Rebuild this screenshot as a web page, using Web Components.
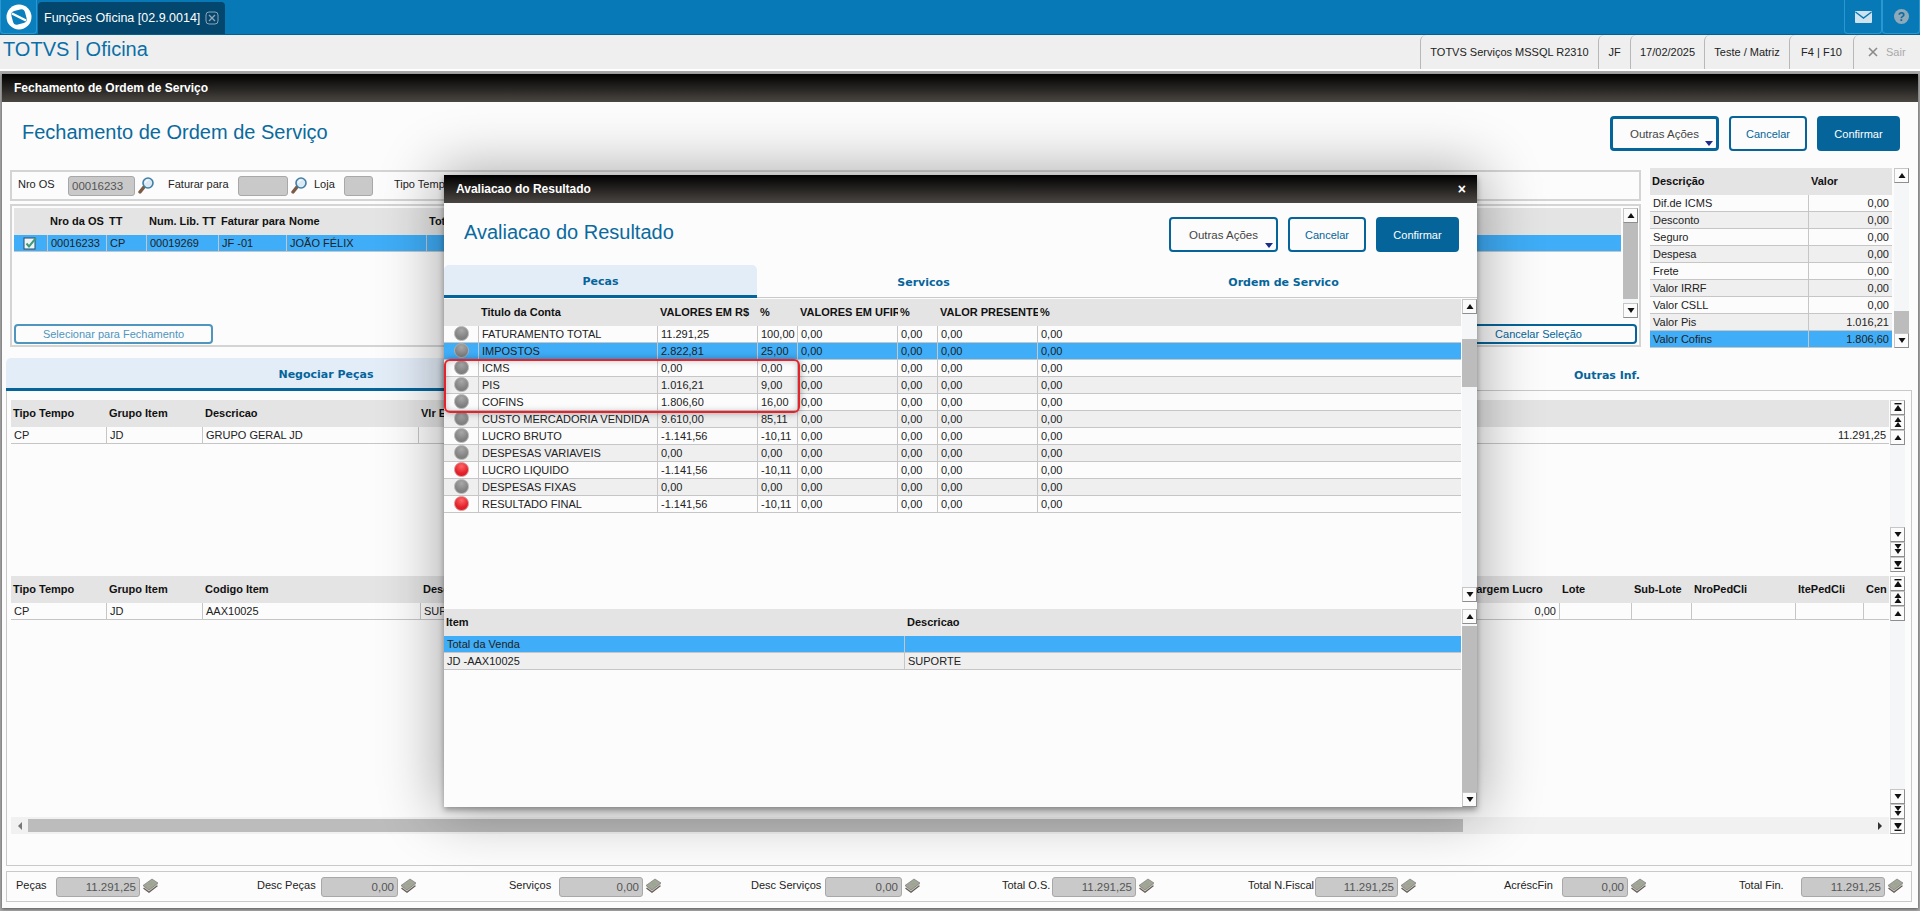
<!DOCTYPE html>
<html lang="pt-BR">
<head>
<meta charset="utf-8">
<title>TOTVS | Oficina</title>
<style>
html, body { margin: 0; height: 911px; overflow: hidden; background: #a9a9a9; font-family: "Liberation Sans", Arial, sans-serif; font-size: 11px; color: #222; }
</style>
</head>
<body>
<tv-app></tv-app>
<script>
// base: each element just gets a shadow root with its css + html
class TvBase extends HTMLElement {
    render(css, html) {
        if (!this.shadowRoot) this.attachShadow({ mode: 'open' });
        this.shadowRoot.innerHTML = `<style>${css}</style>${html}`;
    }
}

const ICONS = {
    lens: `<svg width="16" height="19" viewBox="0 0 16 19"><path d="M6 11 L2 16" stroke="#7d5a44" stroke-width="3.4" stroke-linecap="round"/><circle cx="10" cy="7" r="5" fill="#dbe9f3" stroke="#3f7fa6" stroke-width="1.6"/><path d="M7.5 7a3 3 0 0 1 3-3" stroke="#fff" fill="none"/></svg>`,
    money: `<svg width="17" height="17" viewBox="0 0 17 17"><path d="M1 10.5 L10 4 L16 8 L7 15 Z" fill="#5f5a52"/><path d="M1 9 L10 2.5 L16 6.5 L7 13.5 Z" fill="#cfccc4"/><path d="M1 7.5 L10 1 L16 5 L7 12 Z" fill="#a3a59b" stroke="#6f6f68" stroke-width=".6"/><ellipse cx="9" cy="6" rx="1.8" ry="1.1" fill="#8fb07f"/></svg>`,
    check: `<svg width="15" height="14" viewBox="0 0 15 14"><rect x="1" y="2" width="11" height="11" fill="#eef3f6" stroke="#2b4a66"/><path d="M3.5 7.5 L6 10.5 L13 2" fill="none" stroke="#3f9a7a" stroke-width="2"/></svg>`
};

customElements.define('tv-topbar', class extends TvBase {
    connectedCallback() {
        this.render(`
            :host { display: flex; height: 35px; background: #0779b7; border-bottom: 1px solid #05608f; box-sizing: border-box; }
            .logo { width: 37px; height: 34px; background: #0a7fbe; border: 1px solid #2a97d2; border-top: 0; border-radius: 0 0 4px 4px; box-sizing: border-box; display: flex; align-items: center; justify-content: center; }
            .tab { width: 187px; margin: 2px 0 0 1px; background: #03466e; border-radius: 4px 4px 0 0; color: #fff; font-size: 12.5px; display: flex; align-items: center; padding-left: 6px; box-sizing: border-box; white-space: nowrap; }
            .tab svg { margin-left: 5px; }
            .grow { flex: 1; }
            .btn { width: 38px; height: 34px; border: 1px solid #2a97d2; border-top: 0; border-radius: 0 0 4px 4px; box-sizing: border-box; display: flex; align-items: center; justify-content: center; }
        `, `
            <div class="logo"><svg width="26" height="26" viewBox="0 0 26 26"><circle cx="13" cy="13" r="12.5" fill="#fff"/><rect x="6" y="6" width="14" height="14" rx="4" fill="#0a7fbe" transform="rotate(-15 13 13)"/><path d="M6 9.5 L20 16.5" stroke="#fff" stroke-width="2.4"/></svg></div>
            <div class="tab">Funções Oficina [02.9.0014]<svg width="14" height="14" viewBox="0 0 14 14"><rect x="1" y="1" width="12" height="12" rx="3" fill="none" stroke="#8fa6b6"/><path d="M4 4 L10 10 M10 4 L4 10" stroke="#8fa6b6" stroke-width="1.4"/></svg></div>
            <div class="grow"></div>
            <div class="btn"><svg width="17" height="12" viewBox="0 0 17 12"><rect width="17" height="12" rx="1" fill="#cfe3ef"/><path d="M0.5 1 L8.5 7 L16.5 1" fill="none" stroke="#0779b7" stroke-width="1.4"/></svg></div>
            <div class="btn"><svg width="15" height="15" viewBox="0 0 15 15"><circle cx="7.5" cy="7.5" r="7.5" fill="#8ea9b9"/><text x="7.5" y="11.6" text-anchor="middle" font-family="Liberation Sans" font-weight="700" font-size="12" fill="#0a6a9e">?</text></svg></div>
        `);
    }
});

customElements.define('tv-infobar', class extends TvBase {
    connectedCallback() {
        this.render(`
            :host { display: flex; height: 36px; box-sizing: border-box; background: #efefef; border-bottom: 2px solid #fff; align-items: stretch; }
            h2 { margin: 0 0 0 3px; flex: 1; font: 400 20px "Liberation Sans", Arial, sans-serif; color: #0a6fa8; line-height: 28px; }
            .c { border-left: 1px solid #b8b8b8; border-radius: 6px 0 0 0; box-sizing: border-box; display: flex; align-items: center; justify-content: center; font-size: 11px; color: #222; white-space: nowrap; }
            .sair { color: #a9a9a9; gap: 8px; justify-content: flex-start; padding-left: 14px; }
        `, `
            <h2>TOTVS | Oficina</h2>
            <div class="c" style="width:178px">TOTVS Serviços MSSQL R2310</div>
            <div class="c" style="width:32px">JF</div>
            <div class="c" style="width:74px">17/02/2025</div>
            <div class="c" style="width:85px">Teste / Matriz</div>
            <div class="c" style="width:64px">F4 | F10</div>
            <div class="c sair" style="width:67px"><svg width="10" height="10" viewBox="0 0 10 10"><path d="M1 1 L9 9 M9 1 L1 9" stroke="#8a8a8a" stroke-width="1.6"/></svg>Sair</div>
        `);
    }
});

customElements.define('tv-window', class extends TvBase {
    connectedCallback() {
        const x = this.hasAttribute('closable') ? `<span class="x">×</span>` : '';
        this.render(`
            :host { display: flex; flex-direction: column; background: #fcfcfc; }
            header { height: 28px; flex: none; background: linear-gradient(#000, #4a4642); color: #fff; font-weight: 700; font-size: 12px; display: flex; align-items: center; justify-content: space-between; padding: 0 12px; }
            .x { font-size: 14px; font-weight: 700; margin-right: -1px; }
            main { flex: 1; min-height: 0; display: flex; flex-direction: column; }
        `, `<header><span>${this.getAttribute('heading')}</span>${x}</header><main><slot></slot></main>`);
    }
});

customElements.define('tv-button', class extends TvBase {
    connectedCallback() {
        const menu = this.hasAttribute('menu');
        const thick = this.hasAttribute('thick');
        this.render(`
            :host { display: inline-flex; box-sizing: border-box; height: 35px; border: ${thick ? 3 : 2}px solid #05659b; border-radius: 4px; align-items: center; justify-content: center; position: relative; font-size: ${menu ? 11.5 : 11}px; white-space: nowrap; color: ${menu ? '#444' : '#05659b'}; background: #fcfcfc; }
            :host([primary]) { background: #05659b; color: #fff; }
            :host([thin]) { height: 20px; }
            :host([muted]) { border-color: #4f95bd; color: #4f95bd; }
            .arrow { position: absolute; right: 3px; bottom: 2px; width: 0; height: 0; border: 4px solid transparent; border-bottom: 0; border-top: 5px solid #1b2c8c; }
        `, `<slot></slot>${menu ? '<span class="arrow"></span>' : ''}`);
    }
});

customElements.define('tv-tabs', class extends TvBase {
    connectedCallback() {
        this.render(`:host { display: flex; height: 33px; flex: none; box-sizing: border-box; border-bottom: 1px solid #c9c9c9; }`, `<slot></slot>`);
    }
});

customElements.define('tv-tab', class extends TvBase {
    connectedCallback() {
        this.render(`
            :host { display: flex; flex: none; align-items: center; justify-content: center; box-sizing: border-box; height: 33px; padding-top: 2px; font: 700 11px "DejaVu Sans", Verdana, sans-serif; color: #05659b; white-space: nowrap; }
            :host([active]) { background: #e3edf8; border-radius: 5px 5px 0 0; border-bottom: 3px solid #05659b; }
        `, `<slot></slot>`);
    }
});

customElements.define('tv-led', class extends TvBase {
    connectedCallback() {
        const red = this.getAttribute('color') === 'red';
        this.render(`
            :host { display: block; width: 15px; height: 15px; border-radius: 50%; box-sizing: border-box; margin: 0 auto;
                border: 1px solid ${red ? '#d98a8a' : '#b0b0b0'};
                background: radial-gradient(circle at 50% 25%, ${red ? '#f66, #e4212b 60%, #d01a24' : '#a8a8a8, #848484 60%, #747474'}); }
        `, ``);
    }
});

customElements.define('tv-scroll', class extends TvBase {
    btn(kind) {
        const tri = (y, up) => up ? `<path d="M4.5 ${y + 5} L8 ${y} L11.5 ${y + 5} Z"/>` : `<path d="M4.5 ${y} L11.5 ${y} L8 ${y + 5} Z"/>`;
        const g = {
            up: tri(5, true), down: tri(5, false),
            dup: tri(2, true) + tri(7, true), ddown: tri(2, false) + tri(7, false),
            top: `<rect x="4.5" y="3" width="7" height="1.4"/>` + tri(5, true) + `<rect x="4.5" y="10" width="7" height="1"/>`,
            end: `<rect x="4.5" y="4" width="7" height="1"/>` + tri(5, false) + `<rect x="4.5" y="10.6" width="7" height="1.4"/>`
        }[kind];
        return `<div class="b"><svg width="16" height="15" viewBox="0 0 16 15" fill="#111">${g}</svg></div>`;
    }
    connectedCallback() {
        const full = this.hasAttribute('full');
        const t = this.getAttribute('thumb-top');
        const h = this.getAttribute('thumb-h');
        const head = full ? ['top', 'dup', 'up'] : ['up'];
        const foot = full ? ['down', 'ddown', 'end'] : ['down'];
        this.render(`
            :host { display: flex; flex-direction: column; flex: none; width: 15px; background: #f5f6f8; box-sizing: border-box; }
            .b { height: 15px; flex: none; box-sizing: border-box; background: #fbfbfb; border: 1px solid #c6c6c6; border-right-color: #8e8e8e; border-bottom-color: #8e8e8e; display: flex; align-items: center; justify-content: center; overflow: hidden; }
            .b svg { flex: none; margin: 0 -1px; }
            .track { flex: 1; min-height: 0; }
            .thumb { background: #bcbcbc; }
        `, `${head.map(k => this.btn(k)).join('')}
            <div class="track">${h ? `<div class="thumb" style="margin-top:${t}px;height:${h}px"></div>` : ''}</div>
            ${foot.map(k => this.btn(k)).join('')}`);
    }
});

customElements.define('tv-grid', class extends TvBase {
    cell(v) {
        if (v === '@check') return `<span class="ic">${ICONS.check}</span>`;
        if (v === '@led') return `<tv-led></tv-led>`;
        if (v === '@red') return `<tv-led color="red"></tv-led>`;
        return v;
    }
    connectedCallback() {
        const cols = JSON.parse(this.getAttribute('cols'));
        const rows = JSON.parse(this.getAttribute('rows'));
        const sel = this.hasAttribute('sel') ? +this.getAttribute('sel') : -1;
        const tpl = cols.map(c => c[1] ? c[1] + 'px' : '1fr').join(' ');
        const head = cols.map(c => `<div class="h">${c[0]}</div>`).join('');
        const body = rows.map((r, i) => {
            const cls = i === sel ? 'sel' : (i % 2 ? 'alt' : '');
            return `<div class="row ${cls}">${r.map((v, n) =>
                `<div class="c ${cols[n][2] === 'r' ? 'r' : ''} ${String(v)[0] === '@' ? 'icon' : ''}">${this.cell(v)}</div>`).join('')}</div>`;
        }).join('');
        this.render(`
            :host { display: block; min-width: 0; overflow: hidden; color: #222; }
            .head, .row { display: grid; grid-template-columns: ${tpl}; }
            .head { height: 27px; background: #e4e4e4; font-weight: 700; color: #111; }
            .h { padding: 0 2px; line-height: 27px; overflow: hidden; white-space: nowrap; }
            .row { height: 17px; box-sizing: border-box; background: #fcfcfc; border-bottom: 1px solid #c6c6c6; }
            .row.alt { background: #efefef; }
            .row.sel { background: #3fadf7; }
            .c { padding: 0 3px; line-height: 16px; overflow: hidden; white-space: nowrap; border-right: 1px solid #c6c6c6; min-width: 0; }
            .c:last-child { border-right: 0; }
            .c.r { text-align: right; }
            .c.icon { padding: 0; }
            .ic { display: flex; justify-content: center; padding-top: 1px; }
            .ic svg { display: block; }
        `, `<div class="head">${head}</div>${body}`);
    }
});

customElements.define('tv-field', class extends TvBase {
    connectedCallback() {
        const a = n => this.getAttribute(n);
        const icon = a('icon');
        this.render(`
            :host { display: flex; flex: none; align-items: center; white-space: nowrap; color: #222; }
            label { display: block; margin-top: -4px; }
            .in { box-sizing: border-box; height: 20px; background: #c9c9c9; border: 1px solid #a8a8a8; border-radius: 3px; padding: 0 3px; line-height: 18px; color: #555; font-size: 11.5px; }
            .ic { display: flex; margin-left: ${icon === 'lens' ? 3 : 2}px; }
        `, `<label style="width:${a('lw')}px">${a('label')}</label>
            <div class="in" style="width:${a('w')}px;text-align:${a('justify') || 'left'}">${a('value') || ''}</div>
            ${icon ? `<span class="ic">${ICONS[icon]}</span>` : ''}`);
    }
});

const j = v => JSON.stringify(v);

customElements.define('tv-resultado', class extends TvBase {
    connectedCallback() {
        const cols = [['', 35], ['Titulo da Conta', 179], ['VALORES EM R$', 100, 'l'], ['%', 40], ['VALORES EM UFIR', 100], ['%', 40], ['VALOR PRESENTE', 100], ['%', 0]];
        const data = [
            ['@led', 'FATURAMENTO TOTAL', '11.291,25', '100,00'],
            ['@led', 'IMPOSTOS', '2.822,81', '25,00'],
            ['@led', 'ICMS', '0,00', '0,00'],
            ['@led', 'PIS', '1.016,21', '9,00'],
            ['@led', 'COFINS', '1.806,60', '16,00'],
            ['@led', 'CUSTO MERCADORIA VENDIDA', '9.610,00', '85,11'],
            ['@led', 'LUCRO BRUTO', '-1.141,56', '-10,11'],
            ['@led', 'DESPESAS VARIAVEIS', '0,00', '0,00'],
            ['@red', 'LUCRO LIQUIDO', '-1.141,56', '-10,11'],
            ['@led', 'DESPESAS FIXAS', '0,00', '0,00'],
            ['@red', 'RESULTADO FINAL', '-1.141,56', '-10,11']
        ].map(r => r.concat(['0,00', '0,00', '0,00', '0,00']));
        const items = [['Total da Venda', ''], ['JD -AAX10025', 'SUPORTE']];
        this.render(`
            :host { display: block; position: absolute; left: 444px; top: 175px; width: 1033px; height: 632px; z-index: 5; box-shadow: 0 3px 6px rgba(0,0,0,.35), 0 0 55px 6px rgba(0,0,0,.32); }
            tv-window { height: 100%; }
            .top { height: 62px; flex: none; box-sizing: border-box; display: flex; align-items: flex-start; justify-content: space-between; padding: 14px 18px 0 20px; }
            h1 { margin: 4px 0 0; font: 400 20px "Liberation Sans", Arial, sans-serif; color: #0a6a9e; }
            .btns { display: flex; gap: 10px; }
            .block { display: flex; gap: 1px; }
            .block tv-grid { flex: 1; }
            .one { height: 303px; margin-top: 1px; position: relative; }
            .two { height: 198px; margin-top: 7px; }
            .mark { position: absolute; left: 0; top: 60px; width: 356px; height: 54px; box-sizing: border-box; border: 2px solid #e6222c; border-radius: 6px; box-shadow: 0 0 7px rgba(0,0,0,.35), inset 0 0 6px rgba(0,0,0,.22); }
        `, `
            <tv-window heading="Avaliacao do Resultado" closable>
                <div class="top">
                    <h1>Avaliacao do Resultado</h1>
                    <div class="btns">
                        <tv-button menu style="width:109px">Outras Ações</tv-button>
                        <tv-button style="width:78px">Cancelar</tv-button>
                        <tv-button primary style="width:83px">Confirmar</tv-button>
                    </div>
                </div>
                <tv-tabs>
                    <tv-tab active style="width:313px">Pecas</tv-tab>
                    <tv-tab style="width:333px">Servicos</tv-tab>
                    <tv-tab style="width:387px">Ordem de Servico</tv-tab>
                </tv-tabs>
                <div class="block one">
                    <tv-grid cols='${j(cols)}' rows='${j(data)}' sel="1"></tv-grid>
                    <tv-scroll thumb-top="25" thumb-h="48"></tv-scroll>
                    <div class="mark"></div>
                </div>
                <div class="block two">
                    <tv-grid cols='${j([['Item', 461], ['Descricao', 0]])}' rows='${j(items)}' sel="0"></tv-grid>
                    <tv-scroll thumb-top="2" thumb-h="166"></tv-scroll>
                </div>
            </tv-window>
        `);
    }
});

customElements.define('tv-app', class extends TvBase {
    connectedCallback() {
        const osCols = [['', 34], ['Nro da OS', 59], ['TT', 40], ['Num. Lib. TT', 72], ['Faturar para', 68], ['Nome', 140], ['Total', 0]];
        const osRows = [['@check', '00016233', 'CP', '00019269', 'JF -01', 'JOÃO FÉLIX', '']];
        const resumo = [['Dif.de ICMS', '0,00'], ['Desconto', '0,00'], ['Seguro', '0,00'], ['Despesa', '0,00'], ['Frete', '0,00'], ['Valor IRRF', '0,00'], ['Valor CSLL', '0,00'], ['Valor Pis', '1.016,21'], ['Valor Cofins', '1.806,60']];
        const g1 = [['Tipo Tempo', 96], ['Grupo Item', 96], ['Descricao', 216], ['Vlr E', 0, 'r']];
        const g1r = [['CP', 'JD', 'GRUPO GERAL JD', '11.291,25']];
        const g2 = [['Tipo Tempo', 96], ['Grupo Item', 96], ['Codigo Item', 218], ['Descricao', 1044], ['Margem Lucro', 95, 'r'], ['Lote', 72], ['Sub-Lote', 60], ['NroPedCli', 104], ['ItePedCli', 68], ['Cen', 0]];
        const g2r = [['CP', 'JD', 'AAX10025', 'SUPORTE', '0,00', '', '', '', '', '']];
        this.render(`
            :host { display: block; position: relative; height: 911px; }
            .win { display: block; margin: 3px 2px 0; height: 834px; box-shadow: 0 1px 3px rgba(0,0,0,.5); }
            .top { height: 66px; flex: none; box-sizing: border-box; display: flex; justify-content: space-between; align-items: flex-start; padding: 14px 18px 0 20px; }
            h1 { margin: 5px 0 0; font: 400 20px "Liberation Sans", Arial, sans-serif; color: #0a6a9e; }
            .btns { display: flex; gap: 10px; }
            .mid { display: flex; height: 180px; flex: none; padding-left: 8px; }
            .left { width: 1631px; flex: none; padding-top: 2px; box-sizing: border-box; }
            .filter { height: 31px; box-sizing: border-box; border: 2px solid #d4d4d4; display: flex; align-items: center; padding-left: 6px; }
            .filter tv-field:nth-child(2) { margin-left: 14px; }
            .filter tv-field:nth-child(3) { margin-left: 7px; }
            .filter span { margin: -3px 0 0 21px; }
            .os { height: 143px; margin-top: 3px; box-sizing: border-box; border: 2px solid #d4d4d4; padding: 2px 1px 0 2px; display: flex; flex-direction: column; }
            .os .g { display: flex; height: 110px; flex: none; gap: 2px; }
            .os tv-grid { flex: 1; }
            .os .acts { display: flex; justify-content: space-between; margin-top: 6px; padding-right: 1px; }
            .res { margin-left: 9px; display: flex; gap: 2px; flex: none; }
            .res tv-grid { width: 242px; }
            .tabs { margin: 10px 0 0 4px; width: 1906px; }
            .panel { margin-left: 4px; width: 1906px; height: 475px; box-sizing: border-box; border: 1px solid #c9c9c9; border-top: 0; padding: 9px 6px 0 4px; flex: none; }
            .row { display: flex; gap: 1px; }
            .row .col { flex: 1; min-width: 0; display: flex; flex-direction: column; }
            .row .col tv-grid { flex: 1; }
            .r1 { height: 172px; }
            .r2 { height: 258px; margin-top: 4px; }
            .hbar { height: 17px; flex: none; background: #f1f1f1; display: flex; align-items: center; color: #555; }
            .hbar i { display: block; width: 0; height: 0; border: 4px solid transparent; }
            .hbar .l { border-right: 4px solid #777; border-left: 0; margin-left: 7px; }
            .hbar .thumb { height: 13px; width: 1435px; margin-left: 6px; background: #bcbcbc; }
            .hbar .rr { border-left: 4px solid #333; border-right: 0; margin-left: auto; margin-right: 7px; }
            .foot { margin: 5px 0 0 4px; width: 1906px; height: 31px; box-sizing: border-box; border: 1px solid #c9c9c9; display: flex; align-items: center; padding-left: 9px; flex: none; }
        `, `
            <tv-topbar></tv-topbar>
            <tv-infobar></tv-infobar>
            <tv-window class="win" heading="Fechamento de Ordem de Serviço">
                <div class="top">
                    <h1>Fechamento de Ordem de Serviço</h1>
                    <div class="btns">
                        <tv-button menu thick style="width:109px">Outras Ações</tv-button>
                        <tv-button style="width:78px">Cancelar</tv-button>
                        <tv-button primary style="width:83px">Confirmar</tv-button>
                    </div>
                </div>
                <div class="mid">
                    <div class="left">
                        <div class="filter">
                            <tv-field label="Nro OS" lw="50" w="67" value="00016233" icon="lens"></tv-field>
                            <tv-field label="Faturar para" lw="70" w="50" icon="lens"></tv-field>
                            <tv-field label="Loja" lw="30" w="29"></tv-field>
                            <span>Tipo Tempo</span>
                        </div>
                        <div class="os">
                            <div class="g">
                                <tv-grid cols='${j(osCols)}' rows='${j(osRows)}' sel="0"></tv-grid>
                                <tv-scroll thumb-top="0" thumb-h="76"></tv-scroll>
                            </div>
                            <div class="acts">
                                <tv-button thin muted style="width:199px">Selecionar para Fechamento</tv-button>
                                <tv-button thin style="width:197px">Cancelar Seleção</tv-button>
                            </div>
                        </div>
                    </div>
                    <div class="res">
                        <tv-grid cols='${j([['Descrição', 159], ['Valor', 0, 'r']])}' rows='${j(resumo)}' sel="8"></tv-grid>
                        <tv-scroll thumb-top="128" thumb-h="22"></tv-scroll>
                    </div>
                </div>
                <tv-tabs class="tabs">
                    <tv-tab active style="width:640px">Negociar Peças</tv-tab>
                    <tv-tab style="width:640px"></tv-tab>
                    <tv-tab style="width:626px;padding-left:16px">Outras Inf.</tv-tab>
                </tv-tabs>
                <div class="panel">
                    <div class="row r1">
                        <div class="col"><tv-grid cols='${j(g1)}' rows='${j(g1r)}'></tv-grid></div>
                        <tv-scroll full></tv-scroll>
                    </div>
                    <div class="row r2">
                        <div class="col">
                            <tv-grid cols='${j(g2)}' rows='${j(g2r)}'></tv-grid>
                            <div class="hbar"><i class="l"></i><div class="thumb"></div><i class="rr"></i></div>
                        </div>
                        <tv-scroll full></tv-scroll>
                    </div>
                </div>
                <div class="foot">
                    <tv-field label="Peças" lw="40" w="84" value="11.291,25" justify="right" icon="money"></tv-field>
                    <tv-field style="margin-left:98px" label="Desc Peças" lw="64" w="77" value="0,00" justify="right" icon="money"></tv-field>
                    <tv-field style="margin-left:92px" label="Serviços" lw="50" w="84" value="0,00" justify="right" icon="money"></tv-field>
                    <tv-field style="margin-left:89px" label="Desc Serviços" lw="74" w="77" value="0,00" justify="right" icon="money"></tv-field>
                    <tv-field style="margin-left:81px" label="Total O.S." lw="50" w="84" value="11.291,25" justify="right" icon="money"></tv-field>
                    <tv-field style="margin-left:93px" label="Total N.Fiscal" lw="67" w="83" value="11.291,25" justify="right" icon="money"></tv-field>
                    <tv-field style="margin-left:87px" label="AcréscFin" lw="58" w="66" value="0,00" justify="right" icon="money"></tv-field>
                    <tv-field style="margin-left:92px" label="Total Fin." lw="62" w="84" value="11.291,25" justify="right" icon="money"></tv-field>
                </div>
            </tv-window>
            <tv-resultado></tv-resultado>
        `);
    }
});
</script>
</body>
</html>
